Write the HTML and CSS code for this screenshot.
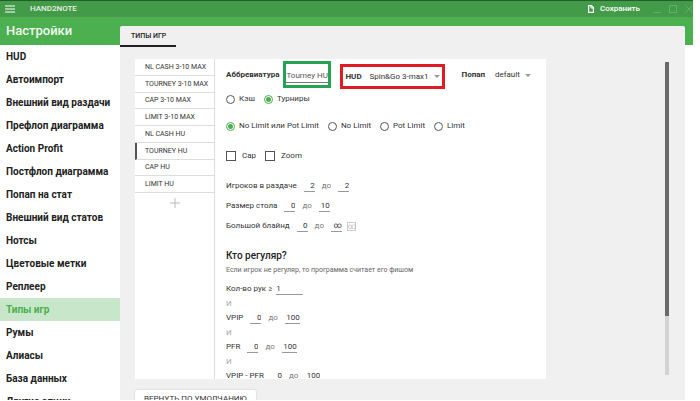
FILE: index.html
```html
<!DOCTYPE html>
<html lang="ru">
<head>
  <meta charset="utf-8">
  <title>Hand2Note - Настройки</title>
  <link rel="stylesheet" href="styles.css">
</head>
<body>
  <div class="app">
    <header class="titlebar">
      <button class="icon-btn" aria-label="Меню">
        <svg width="10" height="8" viewBox="0 0 10 8"><path d="M0 1h10M0 4h10M0 7h10" stroke="#fff" stroke-width="1.2"/></svg>
      </button>
      <span class="brand">HAND2NOTE</span>
      <button class="save">
        <svg width="6" height="8" viewBox="0 0 6 8"><path d="M.6.6h2.8l2 2v4.8H.6z" fill="none" stroke="#fff" stroke-width="1.2"/><path d="M3 .6v2.4h2.6" fill="none" stroke="#fff"/></svg>
        Сохранить
      </button>
      <div class="window-btns">
        <button class="icon-btn" aria-label="Свернуть">
          <svg width="8" height="8" viewBox="0 0 8 8"><path d="M0 7.5h8" stroke="#62b067"/></svg>
        </button>
        <button class="icon-btn" aria-label="Развернуть">
          <svg width="8" height="8" viewBox="0 0 8 8"><path d="M.5.5h7v7h-7z" fill="none" stroke="#62b067"/></svg>
        </button>
        <button class="icon-btn" aria-label="Закрыть">
          <svg width="8" height="8" viewBox="0 0 8 8"><path d="M.5.5l7 7M7.5.5l-7 7" stroke="#62b067"/></svg>
        </button>
      </div>
    </header>

    <div class="main">
      <aside class="sidebar">
        <h1>Настройки</h1>
        <nav>
          <a href="#">HUD</a>
          <a href="#">Автоимпорт</a>
          <a href="#">Внешний вид раздачи</a>
          <a href="#">Префлоп диаграмма</a>
          <a href="#">Action Profit</a>
          <a href="#">Постфлоп диаграмма</a>
          <a href="#">Попап на стат</a>
          <a href="#">Внешний вид статов</a>
          <a href="#">Нотсы</a>
          <a href="#">Цветовые метки</a>
          <a href="#">Реплеер</a>
          <a href="#" class="active">Типы игр</a>
          <a href="#">Румы</a>
          <a href="#">Алиасы</a>
          <a href="#">База данных</a>
          <a href="#">Другие опции</a>
        </nav>
      </aside>

      <section class="panel">
        <button class="tab">ТИПЫ ИГР</button>

        <div class="workspace">
          <div class="card">
            <div class="types">
              <div class="type-list">
                <button>NL CASH 3-10 MAX</button>
                <button>TOURNEY 3-10 MAX</button>
                <button>CAP 3-10 MAX</button>
                <button>LIMIT 3-10 MAX</button>
                <button>NL CASH HU</button>
                <button class="active">TOURNEY HU</button>
                <button>CAP HU</button>
                <button>LIMIT HU</button>
              </div>
              <button class="add" aria-label="Добавить">
                <svg width="10" height="10" viewBox="0 0 10 10"><path d="M5 0v10M0 5h10" stroke="#bbb"/></svg>
              </button>
            </div>

            <form class="form">
              <div class="row head">
                <label class="strong" for="abbr">Аббревиатура</label>
                <div class="mark green"><input type="text" id="abbr" value="Tourney HU"></div>
                <div class="mark red">
                  <label class="strong" for="hud">HUD</label>
                  <span class="select"><select id="hud"><option>Spin&amp;Go 3-max1</option></select></span>
                </div>
                <div class="popup">
                  <label class="strong" for="popup">Попап</label>
                  <span class="select"><select id="popup"><option>default</option></select></span>
                </div>
              </div>

              <div class="row kind">
                <label><input type="radio" name="kind">Кэш</label>
                <label><input type="radio" name="kind" checked>Турниры</label>
              </div>

              <div class="row limit">
                <label><input type="radio" name="limit" checked>No Limit или Pot Limit</label>
                <label><input type="radio" name="limit">No Limit</label>
                <label><input type="radio" name="limit">Pot Limit</label>
                <label><input type="radio" name="limit">Limit</label>
              </div>

              <div class="row checks">
                <label><input type="checkbox">Cap</label>
                <label><input type="checkbox">Zoom</label>
              </div>

              <div class="ranges">
                <div class="range">
                  <label for="players">Игроков в раздаче</label>
                  <input type="text" id="players" value="2">
                  <span>до</span>
                  <input type="text" value="2" aria-label="Игроков до">
                </div>
                <div class="range">
                  <label for="table">Размер стола</label>
                  <input type="text" id="table" value="0">
                  <span>до</span>
                  <input type="text" value="10" aria-label="Размер стола до">
                </div>
                <div class="range">
                  <label for="blind">Большой блайнд</label>
                  <input type="text" id="blind" value="0">
                  <span>до</span>
                  <input type="text" value="∞" aria-label="Большой блайнд до">
                  <button type="button" class="inf">∞</button>
                </div>
              </div>

              <h2>Кто регуляр?</h2>
              <p class="hint">Если игрок не регуляр, то программа считает его фишом</p>

              <div class="rules">
                <div class="range">
                  <label for="hands">Кол-во рук ≥</label>
                  <input type="text" id="hands" class="hands" value="1">
                </div>
                <div class="and">И</div>
                <div class="range">
                  <label for="vpip">VPIP</label>
                  <input type="text" id="vpip" value="0">
                  <span>до</span>
                  <input type="text" class="wide" value="100" aria-label="VPIP до">
                </div>
                <div class="and">И</div>
                <div class="range">
                  <label for="pfr">PFR</label>
                  <input type="text" id="pfr" value="0">
                  <span>до</span>
                  <input type="text" class="wide" value="100" aria-label="PFR до">
                </div>
                <div class="and">И</div>
                <div class="range">
                  <label for="diff">VPIP - PFR</label>
                  <input type="text" id="diff" value="0">
                  <span>до</span>
                  <input type="text" class="wide" value="100" aria-label="VPIP - PFR до">
                </div>
              </div>
            </form>
          </div>
          <div class="scrollbar"><div class="thumb"></div></div>
        </div>

        <button class="reset">ВЕРНУТЬ ПО УМОЛЧАНИЮ</button>
      </section>
    </div>
  </div>
</body>
</html>
```
FILE: styles.css
```css
* {
  box-sizing: border-box;
}

body {
  margin: 0;
  background: #fff;
  color: #333;
  font: 8px/12px Roboto, "Noto Sans", sans-serif;
}

button, input, select {
  font: inherit;
  color: inherit;
  background: none;
  border: 0;
  margin: 0;
  padding: 0;
}

button {
  cursor: pointer;
}

svg {
  display: block;
}

.app {
  display: flex;
  flex-direction: column;
  height: 100vh;
  padding: 0 7px 1px 0;
  overflow: hidden;
}

/* title bar */
.titlebar {
  display: flex;
  align-items: center;
  height: 17px;
  flex-shrink: 0;
  padding: 0 0 0 5px;
  background: #439a49;
  border-top: 1px solid #215f2a;
  color: #fff;
}

.brand {
  margin-left: 15px;
  font-weight: 500;
  color: #e3f2e4;
}

.save {
  display: flex;
  align-items: center;
  gap: 6px;
  margin-left: auto;
  font-weight: 500;
}

.window-btns {
  display: flex;
  gap: 8px;
  margin-left: 13px;
}

.main {
  display: flex;
  flex: 1;
  min-height: 0;
  background: linear-gradient(#4caf50 28px, #fff 28px);
}

/* sidebar */
.sidebar {
  width: 120px;
  flex-shrink: 0;
  overflow: hidden;
}

.sidebar h1 {
  margin: 0;
  padding-left: 6px;
  font-size: 13px;
  line-height: 28px;
  font-weight: 500;
  color: #f1faf1;
}

.sidebar a {
  display: block;
  padding-left: 6px;
  font-size: 10px;
  line-height: 23px;
  font-weight: bold;
  color: #222;
  text-decoration: none;
  white-space: nowrap;
}

.sidebar a.active {
  background: #c8e6c9;
  color: #4caf50;
}

/* right panel */
.panel {
  flex: 1;
  margin: 9px 8px 0 0;
  background: #f0f0f0;
  border-radius: 2px 2px 0 0;
  overflow: hidden;
}

.tab {
  display: block;
  height: 21px;
  padding: 0 10px 0 11px;
  border-bottom: 2px solid #222;
  font-size: 7px;
  font-weight: 500;
  color: #222;
}

.workspace {
  display: flex;
  justify-content: space-between;
  height: calc(100vh - 81px);
  margin: 12px 16px 0 15px;
}

.card {
  display: flex;
  width: 411px;
  background: #fff;
  overflow: hidden;
}

.types {
  width: 80px;
  flex-shrink: 0;
  border-right: 1px solid #ddd;
}

.type-list {
  display: grid;
  grid-template-rows: repeat(8, 1fr);
  height: 134px;
}

.type-list button {
  padding-left: 10px;
  border-bottom: 1px solid #ddd;
  font-size: 7px;
  text-align: left;
  white-space: nowrap;
}

.type-list .active {
  padding-left: 8px;
  border-left: 2px solid #555;
}

.add {
  display: block;
  margin: 5px auto;
}

/* form */
.form {
  padding: 2px 0 0 11px;
  white-space: nowrap;
}

.row {
  display: flex;
  align-items: center;
  gap: 9px;
  height: 20px;
}

.row label {
  display: flex;
  align-items: center;
  gap: 4px;
}

.row .strong {
  font-weight: bold;
}

.row.head {
  height: 28px;
  gap: 0;
}

.mark {
  display: flex;
  align-items: center;
  border: 3px solid;
}

.mark.green {
  align-self: flex-start;
  width: 48px;
  height: 27px;
  margin: 0 9px 0 4px;
  border-color: #23a455;
}

.mark.green input {
  width: 100%;
  padding-top: 3px;
  border-bottom: 1px solid #777;
  color: #555;
}

.mark.red {
  align-self: flex-end;
  width: 105px;
  height: 25px;
  padding: 0 2px;
  border-color: #e01b24;
  justify-content: space-between;
}

.popup {
  display: flex;
  gap: 10px;
  margin-left: 16px;
}

.select {
  display: flex;
  align-items: center;
  gap: 5px;
}

.select::after {
  content: "";
  border: 3px solid transparent;
  border-top-color: #999;
  border-bottom: 0;
}

.select select {
  appearance: none;
}

.limit {
  margin-top: 7px;
}

.checks {
  margin-top: 10px;
}

.checks label {
  gap: 6px;
}

input[type="radio"],
input[type="checkbox"] {
  appearance: none;
  width: 9px;
  height: 9px;
  border: 1px solid #555;
}

input[type="checkbox"] {
  width: 10px;
  height: 10px;
}

input[type="radio"] {
  border-radius: 50%;
}

input[type="radio"]:checked {
  border-color: #4caf50;
  background: radial-gradient(#4caf50 2px, transparent 3px);
}

.ranges {
  margin-top: 10px;
}

.range {
  display: flex;
  align-items: center;
  height: 20px;
}

.range input {
  width: 11px;
  height: 11px;
  margin-left: 7px;
  border-bottom: 1px solid #999;
  text-align: right;
}

.range span {
  margin-left: 7px;
  color: #777;
}

.range .wide {
  width: 15px;
}

.range .hands {
  width: 27px;
  margin-left: 4px;
  text-align: left;
}

.inf {
  width: 9px;
  height: 9px;
  margin-left: 5px;
  border: 1px solid #ccc;
  line-height: 7px;
  color: #bbb;
}

.form h2 {
  margin: 11px 0 0;
  font-size: 10px;
  line-height: 18px;
  font-weight: 500;
  color: #222;
}

.hint {
  margin: 0;
  font-size: 7px;
  line-height: 10px;
  color: #666;
}

.rules {
  margin-top: 6px;
}

.rules .range {
  height: 16px;
}

.and {
  line-height: 13px;
  color: #aaa;
}

/* scrollbar */
.scrollbar {
  width: 4px;
  margin: 3px 0 4px;
  background: #d3d3d3;
}

.thumb {
  height: 81%;
  background: #6a6a6a;
}

.reset {
  display: block;
  height: 18px;
  margin: 11px 0 0 15px;
  padding: 0 9px;
  background: #fff;
  border-radius: 2px;
  box-shadow: 0 0 2px rgba(0, 0, 0, 0.2);
}
```
